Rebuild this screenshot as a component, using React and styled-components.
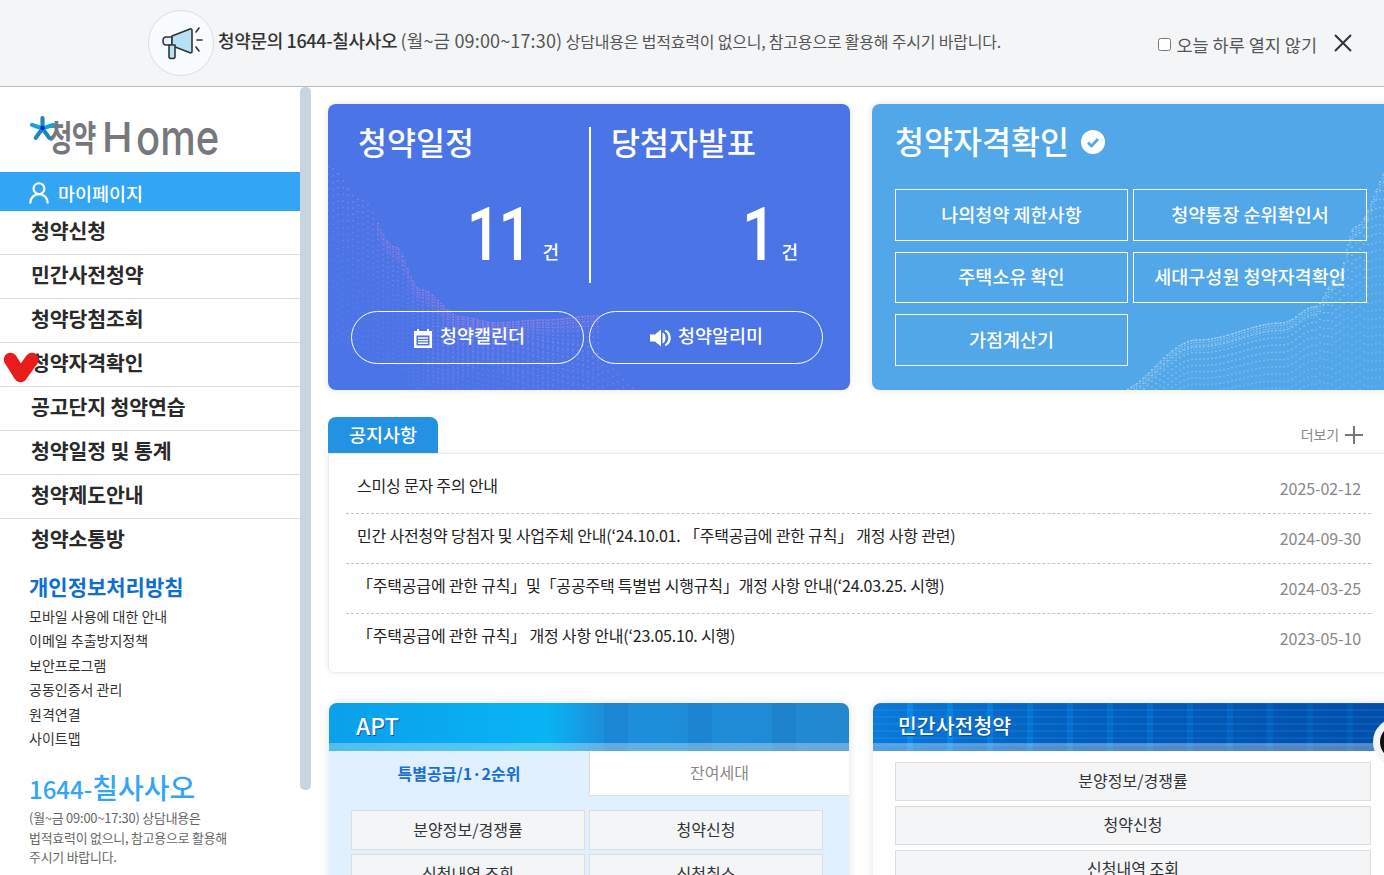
import styled, { createGlobalStyle } from 'styled-components'
import { UserRound } from 'lucide-react'

const KR = `"Noto Sans CJK KR", "Noto Sans", sans-serif`

const GlobalStyle = createGlobalStyle`
  html, body {
    margin: 0;
    height: 100%;
    overflow: hidden;
    background: #fff;
    font-family: ${KR};
    color: #222;
  }
  * { box-sizing: border-box; }
`

const menus = ['청약신청', '민간사전청약', '청약당첨조회', '청약자격확인', '공고단지 청약연습', '청약일정 및 통계', '청약제도안내', '청약소통방']
const links = ['모바일 사용에 대한 안내', '이메일 추출방지정책', '보안프로그램', '공동인증서 관리', '원격연결', '사이트맵']
const notices = [
  ['스미싱 문자 주의 안내', '2025-02-12'],
  ['민간 사전청약 당첨자 및 사업주체 안내(‘24.10.01. 「주택공급에 관한 규칙」 개정 사항 관련)', '2024-09-30'],
  ['「주택공급에 관한 규칙」및「공공주택 특별법 시행규칙」개정 사항 안내(‘24.03.25. 시행)', '2024-03-25'],
  ['「주택공급에 관한 규칙」 개정 사항 안내(‘23.05.10. 시행)', '2023-05-10'],
]
const checks = ['나의청약 제한사항', '청약통장 순위확인서', '주택소유 확인', '세대구성원 청약자격확인', '가점계산기']

// ridge line interpolation for the dotted waves on the two top cards
function ridgeAt(points, x) {
  for (let i = 0; i < points.length - 1; i++) {
    const [x0, y0] = points[i]
    const [x1, y1] = points[i + 1]
    if (x >= x0 && x <= x1) {
      const t = (x - x0) / (x1 - x0)
      const s = (1 - Math.cos(t * Math.PI)) / 2
      return y0 + (y1 - y0) * s
    }
  }
  return null
}

function dotLines(points, count, gap, spread, step, from, to) {
  const lines = []
  for (let i = 0; i < count; i++) {
    let d = ''
    for (let x = from; x <= to; x += step) {
      const y = ridgeAt(points, x)
      if (y === null) continue
      d += `M${x.toFixed(1)} ${(y + i * gap * spread(x)).toFixed(1)}h0`
    }
    lines.push(d)
  }
  return lines
}

function Wave({ points, count, gap, spread, step, from, to, color, strength, size = 1.7, fade = 0.03 }) {
  const lines = dotLines(points, count, gap, spread, step, from, to)
  return (
    <WaveSvg viewBox="0 0 522 286">
      {lines.map((d, i) => (
        <path key={i} d={d} stroke={color} strokeWidth={size} strokeLinecap="round" fill="none"
          opacity={Math.max(0.28, strength - i * fade)} />
      ))}
    </WaveSvg>
  )
}

const blueRidge = [[0, 63], [33, 96], [67, 143], [93, 186], [133, 213], [167, 219], [217, 216], [270, 212]]
const blueLow = [[0, 200], [100, 222], [165, 228], [250, 240], [320, 290]]
const skyRidge = [[240, 290], [326, 236], [410, 219], [443, 203], [466, 173], [483, 123], [522, 60]]

function Megaphone() {
  return (
    <svg width="44" height="36" viewBox="0 0 44 36" fill="none" stroke="#333" strokeWidth="1.6" strokeLinejoin="round" strokeLinecap="round">
      <path d="M7 12h6v8H7c-4 0-4-8 0-8z" fill="#e8f4fa" />
      <path d="M13 11l18-7c1-.4 2 .2 2 1.4v21c0 1.2-1 1.8-2 1.4l-18-7z" fill="#b5e2f5" />
      <path d="M10 20h6v12c0 2-6 2-6 0z" fill="#b5e2f5" />
      <path d="M37 7l3-4M38 15h5M37 22l3 4" />
    </svg>
  )
}

function CalendarIcon() {
  return (
    <svg width="20" height="20" viewBox="0 0 20 20">
      <path d="M1 3h3V1h2v2h8V1h2v2h3v17H1z" fill="#fff" />
      <path d="M3.5 7.5h13v10h-13z" fill="#4b74e6" />
      <path d="M5 10h10M5 12.6h10M5 15.2h10" stroke="#fff" strokeWidth="1.4" />
    </svg>
  )
}

function SpeakerIcon() {
  return (
    <svg width="22" height="18" viewBox="0 0 22 18" fill="#fff">
      <path d="M0 5.500h5L11 .5v17l-6-5H0z" />
      <path d="M12.500 3.500c4 1 4 10 0 11z" />
      <path d="M15.500 .8c7 2.500 7 14 0 16.400l-.8-1.800c4.800-2.200 4.800-10.600 0-12.800z" />
    </svg>
  )
}

export default function App() {
  return (
    <Page>
      <GlobalStyle />
      <Banner>
        <MegaCircle><Megaphone /></MegaCircle>
        <BannerText>
          <strong>청약문의 1644-칠사사오</strong> <BannerHours>(월~금 09:00~17:30)</BannerHours> 상담내용은 법적효력이 없으니, 참고용으로 활용해 주시기 바랍니다.
        </BannerText>
        <HideToday>
          <input type="checkbox" />
          오늘 하루 열지 않기
        </HideToday>
        <CloseIcon viewBox="0 0 18 18">
          <path d="M1 1l16 16M17 1L1 17" stroke="#333" strokeWidth="2" fill="none" />
        </CloseIcon>
      </Banner>

      <Body>
        <Sidebar>
          <Logo>
            <LogoKr>청약</LogoKr><LogoEn>H</LogoEn><LogoOme>ome</LogoOme>
            <LogoStar viewBox="0 0 24 24">
              <path d="M12 2v10M5.500 21l6.500-9M18.500 21l-6.500-9" stroke="#1f86b8" strokeWidth="4" strokeLinecap="round" fill="none" />
              <path d="M2 8.500l10 3.500M22 8.500l-10 3.500" stroke="#12a5dc" strokeWidth="4" strokeLinecap="round" />
              <circle cx="12" cy="11.500" r="2.200" fill="#0a20d8" />
            </LogoStar>
          </Logo>
          <MyPage><UserRound size={26} strokeWidth={2} />마이페이지</MyPage>
          {menus.map((m, i) => (
            <MenuItem key={m} $last={i === menus.length - 1}>
              {m}
              {m === '청약자격확인' && (
                <RedMark viewBox="0 0 36 31">
                  <path d="M7.500 7.500L17.500 23.500L29 7.500" stroke="#e81c1c" strokeWidth="13.500" strokeLinecap="round" strokeLinejoin="round" fill="none" />
                </RedMark>
              )}
            </MenuItem>
          ))}
          <Privacy>개인정보처리방침</Privacy>
          <LinkList>
            {links.map((l) => <li key={l}>{l}</li>)}
          </LinkList>
          <Phone>1644-<b>칠사사오</b></Phone>
          <PhoneNote>(월~금 09:00~17:30) 상담내용은<br />법적효력이 없으니, 참고용으로 활용해<br />주시기 바랍니다.</PhoneNote>
        </Sidebar>
        <ScrollThumb />

        <Main>
          <HeroRow>
            <BlueCard>
              <Wave points={blueRidge} count={26} gap={6} spread={(x) => 0.25 + Math.abs(x - 160) / 170} step={5} from={0} to={270} color="#a78bea" strength={0.7} />
              <Wave points={blueRidge} count={6} gap={2.5} spread={() => 1} step={3} from={50} to={270} color="#b57fdc" strength={0.95} size={1.5} fade={0.1} />
              <Wave points={blueLow} count={14} gap={6} spread={(x) => 0.5 + x / 400} step={5} from={100} to={320} color="#9a84e6" strength={0.7} />
              <Stats>
                <Stat $first>
                  <StatTitle>청약일정</StatTitle>
                  <Count><Num>11</Num><Unit $gap="12px">건</Unit></Count>
                </Stat>
                <Stat>
                  <StatTitle>당첨자발표</StatTitle>
                  <Count><Num>1</Num><Unit $gap="8px">건</Unit></Count>
                </Stat>
              </Stats>
              <Pills>
                <Pill><CalendarIcon />청약캘린더</Pill>
                <Pill><SpeakerIcon />청약알리미</Pill>
              </Pills>
            </BlueCard>

            <SkyCard>
              <Wave points={skyRidge} count={24} gap={6} spread={(x) => 0.4 + x / 500} step={4} from={240} to={522} color="#cfe6fa" strength={0.55} />
              <Wave points={skyRidge} count={5} gap={2.5} spread={() => 1} step={3} from={250} to={522} color="#e4f2fd" strength={0.7} size={1.4} fade={0.1} />
              <SkyTitle>
                청약자격확인
                <svg width="24" height="24" viewBox="0 0 24 24">
                  <circle cx="12" cy="12" r="12" fill="#fff" />
                  <path d="M7 12.500l3.500 3.500L17 9" stroke="#52a7e8" strokeWidth="2.800" fill="none" />
                </svg>
              </SkyTitle>
              <CheckGrid>
                {checks.map((c) => <CheckButton key={c}>{c}</CheckButton>)}
              </CheckGrid>
            </SkyCard>
          </HeroRow>

          <NoticeHead>
            <NoticeTab>공지사항</NoticeTab>
            <More>더보기<PlusMark viewBox="0 0 18 18"><path d="M0 9h18M9 0v18" stroke="#777" strokeWidth="2" /></PlusMark></More>
          </NoticeHead>
          <NoticeBox>
            {notices.map(([text, date], i) => (
              <NoticeRow key={date} $last={i === notices.length - 1}>
                <span>{text}</span>
                <NoticeDate>{date}</NoticeDate>
              </NoticeRow>
            ))}
          </NoticeBox>

          <PanelRow>
            <Panel $tint>
              <AptHead>APT</AptHead>
              <Tabs>
                <Tab $active>특별공급/1·2순위</Tab>
                <Tab>잔여세대</Tab>
              </Tabs>
              <AptGrid>
                <SquareBtn>분양정보/경쟁률</SquareBtn>
                <SquareBtn>청약신청</SquareBtn>
                <SquareBtn>신청내역 조회</SquareBtn>
                <SquareBtn>신청취소</SquareBtn>
              </AptGrid>
            </Panel>
            <Panel>
              <PrivateHead>민간사전청약</PrivateHead>
              <PrivateList>
                <SquareBtn>분양정보/경쟁률</SquareBtn>
                <SquareBtn>청약신청</SquareBtn>
                <SquareBtn>신청내역 조회</SquareBtn>
              </PrivateList>
            </Panel>
          </PanelRow>
        </Main>
      </Body>
      <FloatingBadge />
    </Page>
  )
}

const Page = styled.div`
  position: relative;
  width: 100%;
  height: 100vh;
  overflow: hidden;
`

const Banner = styled.header`
  display: flex;
  align-items: center;
  height: 87px;
  padding: 0 32px 0 148px;
  background: #f4f5f7;
  border-bottom: 1px solid #bbb;
`

const MegaCircle = styled.div`
  display: flex;
  align-items: center;
  justify-content: center;
  flex: none;
  width: 66px;
  height: 66px;
  border: 1px solid #ddd;
  border-radius: 50%;
  background: #f9fcfe;
`

const BannerText = styled.p`
  margin: -6px 0 0 4px;
  font-size: 16px;
  color: #555;
  white-space: nowrap;
  letter-spacing: -0.2px;

  strong {
    font-size: 18px;
    font-weight: 500;
    letter-spacing: -0.35px;
    color: #333;
  }
`

const BannerHours = styled.span`
  font-size: 18px;
  letter-spacing: 0.15px;
`

const HideToday = styled.label`
  display: flex;
  align-items: center;
  margin: 2px 0 0 auto;
  font-size: 17.500px;
  color: #555;
  white-space: nowrap;

  input {
    width: 13px;
    height: 13px;
    margin: 0 5px 0 0;
  }
`

const CloseIcon = styled.svg`
  width: 18px;
  height: 18px;
  margin: 0 0 0 17px;
`

const Body = styled.div`
  display: flex;
  align-items: flex-start;
`

const Sidebar = styled.aside`
  flex: none;
  width: 300px;
`

const Logo = styled.div`
  position: relative;
  display: flex;
  align-items: flex-end;
  height: 85px;
  padding: 0 0 19px 48px;
  color: #77787b;
  line-height: 1;
`

const LogoStar = styled.svg`
  position: absolute;
  left: 30px;
  top: 29px;
  width: 25px;
  height: 25px;
`

const LogoKr = styled.span`
  display: inline-block;
  width: 54px;
  font-size: 29px;
  line-height: 29px;
  font-weight: 700;
  letter-spacing: -1px;
  transform: scale(0.92, 1.22);
  transform-origin: left bottom;
`

const LogoEn = styled.span`
  font-family: "Inter", sans-serif;
  font-size: 41px;
  font-weight: 500;
  line-height: 31px;
  height: 31px;
`

const LogoOme = styled.span`
  display: inline-block;
  width: 84px;
  margin-left: 3px;
  font-family: "Inter", sans-serif;
  font-size: 50px;
  font-weight: 500;
  line-height: 31px;
  height: 31px;
  transform: scaleX(0.8);
  transform-origin: left bottom;
`

const MyPage = styled.div`
  display: flex;
  align-items: center;
  gap: 6px;
  height: 39px;
  padding: 3px 0 0 26px;
  background: #33a5f5;
  color: #fff;
  font-size: 18.500px;
  font-weight: 500;
`

const MenuItem = styled.div`
  position: relative;
  display: flex;
  align-items: center;
  height: 44px;
  padding: 0 0 5px 31px;
  border-bottom: 1px solid ${(p) => (p.$last ? 'transparent' : '#ddd')};
  font-size: 20.500px;
  font-weight: 700;
  letter-spacing: -0.1px;
  color: #2a2a2a;
  white-space: nowrap;
`

const RedMark = styled.svg`
  position: absolute;
  left: 3px;
  top: 9px;
  width: 36px;
  height: 31px;
`

const Privacy = styled.div`
  margin: 7px 0 0 29px;
  font-size: 21px;
  line-height: 32px;
  font-weight: 700;
  color: #0f6fd0;
`

const LinkList = styled.ul`
  margin: 2px 0 0;
  padding: 0 0 0 29px;
  list-style: none;
  font-size: 14px;
  line-height: 24.400px;
  color: #333;
`

const Phone = styled.div`
  margin: 18px 0 0 29px;
  font-size: 24px;
  line-height: 38px;
  font-weight: 500;
  color: #33a5f5;

  b {
    font-size: 28px;
    font-weight: 500;
  }
`

const PhoneNote = styled.p`
  margin: 0 0 0 29px;
  font-size: 12.900px;
  line-height: 19.200px;
  color: #666;
  letter-spacing: -0.2px;
  white-space: nowrap;
`

const ScrollThumb = styled.div`
  flex: none;
  width: 11px;
  height: 703px;
  border-radius: 5px;
  background: #c8d5e0;
`

const Main = styled.main`
  flex: none;
  width: 1065px;
  margin-left: 17px;
  padding-top: 17px;
`

const HeroRow = styled.section`
  display: grid;
  grid-template-columns: 522px 522px;
  gap: 22px;
`

const BlueCard = styled.div`
  position: relative;
  height: 286px;
  padding-top: 23px;
  border-radius: 8px;
  overflow: hidden;
  background: #4b74e6;
  box-shadow: 0 0 6px rgba(0, 0, 0, 0.12);
  color: #fff;
`

const SkyCard = styled(BlueCard)`
  padding: 0 0 0 23px;
  background: #52a7e8;
`

const WaveSvg = styled.svg`
  position: absolute;
  left: 0;
  top: 0;
  width: 522px;
  height: 286px;
`

const Stats = styled.div`
  position: relative;
  display: flex;
  height: 156px;
`

const Stat = styled.div`
  display: flex;
  flex-direction: column;
  justify-content: space-between;
  width: ${(p) => (p.$first ? '263px' : '259px')};
  padding: 0 ${(p) => (p.$first ? '30px' : '52px')} 17px ${(p) => (p.$first ? '30px' : '20px')};
  border-right: ${(p) => (p.$first ? '2px solid #fff' : 'none')};
`

const StatTitle = styled.h2`
  margin: -4px 0 0;
  font-size: 31.500px;
  line-height: 36px;
  font-weight: 500;
  white-space: nowrap;
`

const Count = styled.div`
  display: flex;
  justify-content: flex-end;
  align-items: flex-end;
`

const Num = styled.span`
  display: inline-block;
  font-family: "Roboto", sans-serif;
  font-size: 75px;
  line-height: 64px;
  height: 64px;
  font-weight: 500;
  letter-spacing: -3px;
  transform: scaleX(0.8);
  transform-origin: right center;
`

const Unit = styled.span`
  margin: 0 0 2px ${(p) => p.$gap};
  font-size: 18px;
  line-height: 26px;
  font-weight: 500;
`

const Pills = styled.div`
  position: relative;
  display: grid;
  grid-template-columns: 233px 234px;
  gap: 5px;
  margin: 28px 0 0 23px;
`

const Pill = styled.div`
  display: flex;
  align-items: center;
  justify-content: center;
  gap: 7px;
  height: 53px;
  padding: 0 0 5px 3px;
  border: 1px solid #fff;
  border-radius: 27px;
  font-size: 18.500px;
  font-weight: 500;
  white-space: nowrap;

  svg {
    margin-top: 5px;
  }

  &:last-child {
    gap: 6px;
    padding-left: 1px;
  }
`

const SkyTitle = styled.h2`
  position: relative;
  display: flex;
  align-items: center;
  gap: 12px;
  height: 36px;
  margin: 18px 0 31px;
  font-size: 31.500px;
  font-weight: 500;
  white-space: nowrap;

  svg {
    margin-top: 3px;
  }
`

const CheckGrid = styled.div`
  position: relative;
  display: grid;
  grid-template-columns: 233px 234px;
  grid-auto-rows: 51.500px;
  column-gap: 5px;
  row-gap: 11px;
`

const CheckButton = styled.div`
  display: flex;
  align-items: center;
  justify-content: center;
  padding-bottom: 2px;
  border: 1px solid #fff;
  font-size: 18.500px;
  font-weight: 500;
  white-space: nowrap;
`

const NoticeHead = styled.div`
  display: flex;
  align-items: center;
  justify-content: space-between;
  height: 36px;
  margin-top: 27px;
  padding-right: 30px;
`

const NoticeTab = styled.div`
  display: flex;
  align-items: center;
  justify-content: center;
  width: 110px;
  height: 36px;
  padding-bottom: 2px;
  border-radius: 8px 8px 0 0;
  background: #2492e3;
  color: #fff;
  font-size: 18.500px;
  font-weight: 500;
`

const More = styled.div`
  display: flex;
  align-items: center;
  gap: 6px;
  margin-top: -3px;
  font-size: 14px;
  letter-spacing: -0.1px;
  color: #888;
`

const PlusMark = styled.svg`
  width: 18px;
  height: 18px;
  margin-top: 2px;
`

const NoticeBox = styled.div`
  height: 220px;
  padding: 10px 21px 0 17px;
  border: 1px solid #ececec;
  border-radius: 0 0 6px 6px;
  box-shadow: 0 0 6px rgba(0, 0, 0, 0.08);
`

const NoticeRow = styled.div`
  display: flex;
  justify-content: space-between;
  align-items: center;
  height: 50px;
  padding: 0 10px 7px 11px;
  border-bottom: 1px dashed ${(p) => (p.$last ? 'transparent' : '#c4c4c4')};
  font-size: 16px;
  letter-spacing: -0.2px;
  color: #222;
  white-space: nowrap;
`

const NoticeDate = styled.span`
  margin-top: 6px;
  letter-spacing: -0.1px;
  color: #888;
`

const PanelRow = styled.section`
  display: grid;
  grid-template-columns: 520px 520px;
  gap: 24px;
  margin: 30px 0 0 1px;
`

const Panel = styled.div`
  height: 260px;
  border-radius: 8px 8px 0 0;
  overflow: hidden;
  background: ${(p) => (p.$tint ? '#e0f0ff' : '#fff')};
  box-shadow: 0 0 8px rgba(0, 0, 0, 0.12);
`

const PanelHead = styled.h3`
  display: flex;
  align-items: center;
  height: 48px;
  margin: 0;
  padding: 0 0 4px 27px;
  color: #fff;
  font-size: 23px;
  font-weight: 500;
  text-shadow: 1px 1px 0 #0b4f9e;
  box-shadow: inset 0 -8px 0 rgba(255, 255, 255, 0.3);
`

const AptHead = styled(PanelHead)`
  background:
    repeating-linear-gradient(90deg, transparent 0 60px, rgba(10, 60, 150, 0.1) 60px 84px) 215px 0 no-repeat,
    linear-gradient(90deg, #0aa0ea 0%, #08b4f4 42%, #1c90dc 52%, #2288d0 100%);
`

const PrivateHead = styled(PanelHead)`
  background:
    repeating-linear-gradient(0deg, transparent 0 5px, rgba(120, 170, 240, 0.12) 5px 7px),
    repeating-linear-gradient(90deg, rgba(0, 40, 130, 0.2) 0 34px, transparent 34px 40px),
    linear-gradient(90deg, #0a8ff0 0%, #0070d0 35%, #0058b4 100%);
  padding-left: 25px;
  font-size: 20.500px;
`

const Tabs = styled.div`
  display: grid;
  grid-template-columns: 260px 260px;
  height: 45px;
`

const Tab = styled.div`
  display: flex;
  align-items: center;
  justify-content: center;
  padding-bottom: 2px;
  font-size: 16px;
  font-weight: ${(p) => (p.$active ? 700 : 400)};
  color: ${(p) => (p.$active ? '#1b6fd0' : '#888')};
  background: ${(p) => (p.$active ? 'transparent' : '#fff')};
  border-left: ${(p) => (p.$active ? 'none' : '1px solid #ddd')};
  border-bottom: ${(p) => (p.$active ? 'none' : '1px solid #ddd')};
`

const AptGrid = styled.div`
  display: grid;
  grid-template-columns: 234px 234px;
  grid-auto-rows: 40px;
  gap: 4px;
  margin: 14px 0 0 22px;
`

const PrivateList = styled.div`
  display: grid;
  grid-auto-rows: 39px;
  gap: 5px;
  margin: 11px 0 0 22px;
  width: 476px;
`

const SquareBtn = styled.div`
  display: flex;
  align-items: center;
  justify-content: center;
  padding-bottom: 3px;
  border: 1px solid #ddd;
  background: #f4f5f7;
  font-size: 16px;
  color: #333;
  white-space: nowrap;
`

const FloatingBadge = styled.div`
  position: absolute;
  left: 1373px;
  top: 718px;
  width: 48px;
  height: 48px;
  border: 7px solid #f4f4f4;
  border-radius: 50%;
  background: #111;
`
